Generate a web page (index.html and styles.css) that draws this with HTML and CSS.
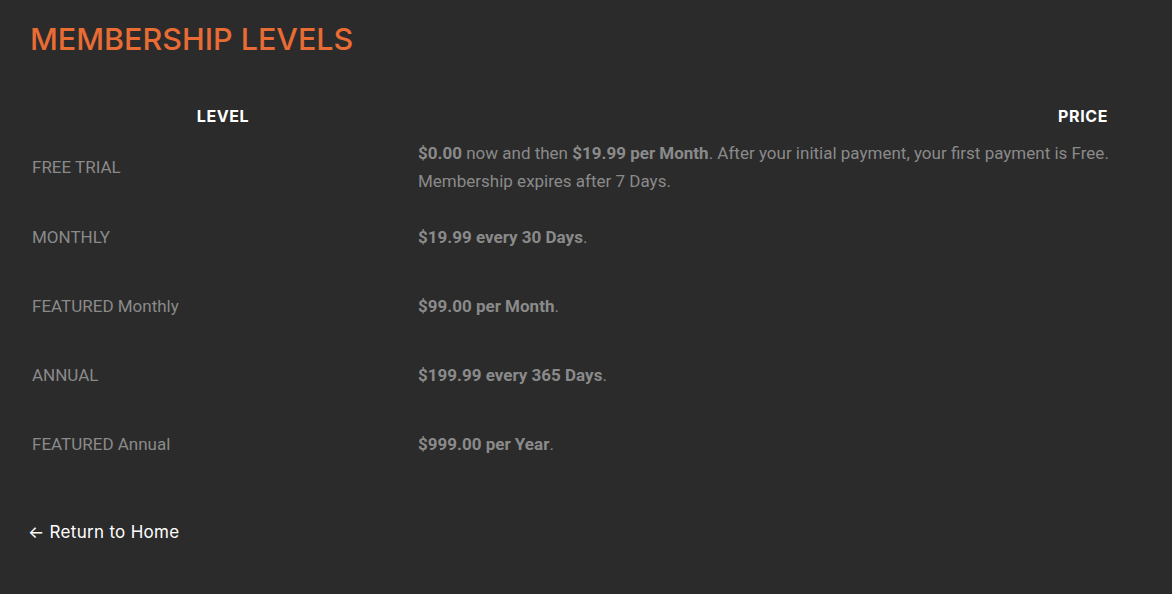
FILE: index.html
```html
<!DOCTYPE html>
<html>
<head>
<meta charset="utf-8">
<link rel="stylesheet" href="styles.css">
</head>
<body>
<div class="page">
  <h1 class="title">MEMBERSHIP LEVELS</h1>
  <div class="levels">
    <div class="head head-level">LEVEL</div>
    <div class="head head-price">PRICE</div>

    <div class="cell level">FREE TRIAL</div>
    <div class="cell price"><span><strong>$0.00</strong> now and then <strong>$19.99 per Month</strong>. After your initial payment, your first payment is Free. Membership expires after 7 Days.</span></div>

    <div class="cell level">MONTHLY</div>
    <div class="cell price"><span><strong>$19.99 every 30 Days</strong>.</span></div>

    <div class="cell level">FEATURED Monthly</div>
    <div class="cell price"><span><strong>$99.00 per Month</strong>.</span></div>

    <div class="cell level">ANNUAL</div>
    <div class="cell price"><span><strong>$199.99 every 365 Days</strong>.</span></div>

    <div class="cell level">FEATURED Annual</div>
    <div class="cell price"><span><strong>$999.00 per Year</strong>.</span></div>
  </div>
  <a class="back" href="#">&larr; Return to Home</a>
</div>
</body>
</html>
```
FILE: styles.css
```css
html, body {
  margin: 0;
  padding: 0;
  background: #2b2b2b;
  height: 100%;
}
.page {
  padding: 22px 30px 0 30px;
  font-family: Roboto, "Liberation Sans", sans-serif;
}
.title {
  margin: 0;
  font-family: Inter, "Noto Sans", sans-serif;
  font-weight: 500;
  font-size: 30.5px;
  line-height: 34px;
  color: #e86c34;
  letter-spacing: 0;
}
.levels {
  margin-top: 50px;
  width: 1082px;
  display: grid;
  grid-template-columns: 386px 696px;
  grid-template-rows: 26px 70px repeat(4, 69px);
}
.head {
  font-family: Inter, "Noto Sans", sans-serif;
  font-weight: 700;
  font-size: 16px;
  line-height: 20px;
  color: #ffffff;
  letter-spacing: 0.6px;
  padding: 0 2px;
}
.head-level { text-align: center; }
.head-price { text-align: right; padding-right: 4px; }
.cell {
  font-size: 17px;
  line-height: 28px;
  color: #8a8a8a;
  padding: 0 2px;
  display: flex;
  align-items: center;
}
.price strong { font-weight: 700; }
.back {
  display: inline-block;
  margin-top: 44px;
  font-family: Inter, "Noto Sans", sans-serif;
  font-size: 17px;
  line-height: 20px;
  letter-spacing: 0.3px;
  color: #ffffff;
  text-decoration: none;
  margin-left: -2px;
}
```
